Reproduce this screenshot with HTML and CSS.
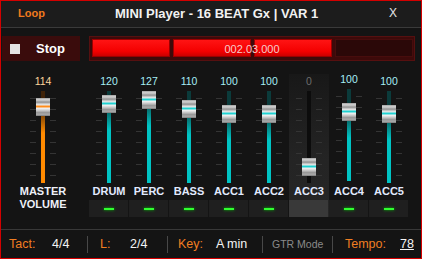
FILE: index.html
```html
<!DOCTYPE html>
<html lang="en">
<head>
    <meta charset="UTF-8">
    <title>MINI Player</title>
    <link rel="stylesheet" href="styles.css">
</head>
<body>

<div class="window">
    <header class="titlebar">
        <span class="loop">Loop</span>
        <span class="title">MINI Player - 16 BEAT Gx | VAR 1</span>
        <span class="close">X</span>
    </header>

    <div class="transport">
        <button class="stop"><span class="stop-sq"></span>Stop</button>
        <div class="progress">
            <div class="seg on"></div>
            <div class="seg on"></div>
            <div class="seg on"></div>
            <div class="seg"></div>
            <span class="pos">002.03.000</span>
        </div>
    </div>

    <!-- Mixer strips are built by the script below -->
    <div class="mixer">
        <div class="strip master" id="master"></div>
        <div class="channels" id="channels"></div>
    </div>

    <footer class="status">
        <div class="cell c1"><span class="k w-tact">Tact:</span><span class="v">4/4</span></div>
        <div class="sep"></div>
        <div class="cell c2"><span class="k w-l">L:</span><span class="v">2/4</span></div>
        <div class="sep"></div>
        <div class="cell c3"><span class="k w-key">Key:</span><span class="v">A min</span></div>
        <div class="sep"></div>
        <div class="cell c4"><span class="gtr">GTR Mode</span></div>
        <div class="sep"></div>
        <div class="cell c5"><span class="k w-tempo">Tempo:</span><span class="v tempo">78</span></div>
    </footer>
</div>

<script>
    const channels = [
        ['DRUM', 120], ['PERC', 127], ['BASS', 110], ['ACC1', 100],
        ['ACC2', 100], ['ACC3', 0, 'sel'], ['ACC4', 100, 'lift'], ['ACC5', 100]
    ];

    // knob top inside the fader box, 127 = top, 0 = bottom
    function knobTop(val) {
        return Math.round(70 - val * 67 / 127);
    }

    function fillStrip(el, name, val, showLed, showFill) {
        const top = knobTop(val);
        el.innerHTML =
            '<div class="value">' + val + '</div>' +
            '<div class="fader">' +
                '<div class="track">' + (showFill ? '<div class="fill" style="top:' + (top + 6) + 'px"></div>' : '') + '</div>' +
                '<div class="knob" style="top:' + top + 'px"></div>' +
            '</div>' +
            '<div class="label">' + name + '</div>' +
            (showLed ? '<div class="led"><span></span></div>' : '');
    }

    fillStrip(document.getElementById('master'), 'MASTER<br>VOLUME', 114, false, true);

    const box = document.getElementById('channels');
    channels.forEach(ch => {
        const el = document.createElement('div');
        el.className = 'strip' + (ch[2] ? ' ' + ch[2] : '');
        fillStrip(el, ch[0], ch[1], true, ch[1] > 0);
        if (ch[2] === 'sel') el.querySelector('.led').innerHTML = '';
        box.appendChild(el);
    });
</script>

</body>
</html>
```

FILE: styles.css
```css
* {
    box-sizing: border-box;
}
body {
    margin: 0;
    background: #141414;
    font-family: "Liberation Sans", Arial, sans-serif;
}
.window {
    width: 422px;
    height: 259px;
    border: 1px solid #d40000;
    background: #141414;
    overflow: hidden;
    display: flex;
    flex-direction: column;
}

/* title bar */
.titlebar {
    flex: none;
    height: 27px;
    padding-bottom: 2px;
    display: flex;
    align-items: center;
    background: #1c1c1c;
    border-bottom: 1px solid #3a3a3a;
}
.loop {
    width: 114px;
    padding-left: 17px;
    color: #f07a1e;
    font-weight: bold;
    font-size: 11px;
}
.title {
    color: #f2f2f2;
    font-weight: bold;
    font-size: 13px;
}
.close {
    margin-left: auto;
    margin-right: 24px;
    color: #e4e4e4;
    font-size: 12px;
}

/* transport row */
.transport {
    flex: none;
    height: 33px;
    padding: 8px 6px 0 1px;
    display: flex;
    gap: 9px;
}
.stop {
    width: 78px;
    height: 25px;
    margin: 0;
    background: #3a0c0c;
    border: none;
    display: flex;
    align-items: center;
    padding: 0 0 0 8px;
    gap: 16px;
    color: #fff;
    font: bold 13px "Liberation Sans", Arial, sans-serif;
}
.stop-sq {
    width: 10px;
    height: 10px;
    background: #e4e4e4;
}
.progress {
    position: relative;
    flex: 1;
    height: 25px;
    background: #3d0a0a;
    border: 1px solid #561010;
    padding: 2px 1px 3px 2px;
    display: flex;
    gap: 3px;
}
.seg {
    flex: 1;
    background: #2b0808;
    border: 1px solid #470d0d;
}
.seg.on {
    background: linear-gradient(#ff1414, #f40000 70%, #cc0000);
    border-color: #9a0000;
}
.pos {
    position: absolute;
    inset: 0;
    display: flex;
    align-items: center;
    justify-content: center;
    color: #f6cccc;
    font-size: 11px;
}

/* mixer */
.mixer {
    flex: none;
    display: flex;
    padding: 13px 0 12px 1px;
}
.channels {
    display: flex;
}
.strip {
    width: 40px;
    display: flex;
    flex-direction: column;
    align-items: center;
}
.strip.master {
    width: 82px;
    margin-right: 5px;
}
.strip.sel {
    background: linear-gradient(#181818, #242424 60%, #262626);
}
.value {
    height: 14px;
    line-height: 14px;
    font-size: 10.5px;
    color: #a6eef6;
}
.master .value {
    color: #ffd49c;
}
.sel .value {
    color: #6c6c6c;
}
.fader {
    position: relative;
    width: 40px;
    height: 97px;
}
.lift .value {
    margin-top: -2px;
}
.lift .fader {
    margin-bottom: 2px;
}
.fader::before, .fader::after {
    content: "";
    position: absolute;
    top: 10px;
    width: 6px;
    height: 78px;
    background: repeating-linear-gradient(to bottom, #343434 0 1px, transparent 1px 11px);
}
.fader::before {
    left: 7px;
}
.fader::after {
    right: 7px;
}
.track {
    position: absolute;
    left: 18px;
    top: 3px;
    width: 4px;
    height: 92px;
    background: #0b3b3b;
    overflow: hidden;
}
.fill {
    position: absolute;
    left: 0;
    right: 0;
    bottom: 0;
    background: linear-gradient(#0b4444, #00c4c4 26px);
}
.master .track {
    background: #3e2208;
}
.master .fill {
    background: linear-gradient(#4a2a0a, #ff8a00 26px);
}
.sel .track {
    background: #0c0c0c;
}
.knob {
    position: absolute;
    left: 13px;
    width: 14px;
    height: 18px;
    background: linear-gradient(#8e8e8e 0, #cfcfcf 1px, #bdbdbd 3px, #8a8a8a 4px, #d6d6d6 6px, #ececec 7px,
        #1fd0d0 8px, #1fd0d0 9px, #f4f4f4 10px, #e6e6e6 11px, #bcbcbc 13px, #8c8c8c 15px, #b4b4b4 16px, #7a7a7a 18px);
}
.master .knob {
    background: linear-gradient(#8e8e8e 0, #cfcfcf 1px, #bdbdbd 3px, #8a8a8a 4px, #d6d6d6 6px, #ececec 7px,
        #ff8c1a 8px, #ff8c1a 9px, #f4f4f4 10px, #e6e6e6 11px, #bcbcbc 13px, #8c8c8c 15px, #b4b4b4 16px, #7a7a7a 18px);
}
.label {
    height: 13px;
    line-height: 13px;
    font-size: 11px;
    font-weight: bold;
    color: #e2eaff;
    white-space: nowrap;
}
.master .label {
    height: auto;
    line-height: 12.5px;
    text-align: center;
    color: #eef0f8;
}
.led {
    align-self: flex-start;
    margin-top: 2px;
    width: 39px;
    height: 17px;
    background: #1f1f1f;
    display: flex;
    align-items: center;
    justify-content: center;
}
.led span {
    width: 10px;
    height: 2px;
    background: #30ff30;
    box-shadow: 0 0 3px #0c0;
}
.sel .led {
    background: #393939;
}

/* status bar */
.status {
    flex: none;
    height: 29px;
    border-top: 1px solid #383838;
    display: flex;
    align-items: center;
    font-size: 12.5px;
}
.cell {
    display: flex;
    align-items: center;
}
.c1 { width: 86px; padding-left: 8px; }
.c2 { width: 79px; padding-left: 12px; }
.c3 { width: 94px; padding-left: 10px; }
.c4 { width: 69px; padding-left: 9px; }
.c5 { flex: 1; padding-left: 12px; }
.sep {
    width: 1px;
    height: 17px;
    background: #484848;
}
.k {
    color: #f07e22;
}
.w-tact { width: 43px; }
.w-l { width: 30px; }
.w-key { width: 38px; }
.w-tempo { width: 55px; }
.v {
    color: #f4f4f4;
}
.tempo {
    text-decoration: underline;
}
.gtr {
    color: #8a8a8a;
    font-size: 10.5px;
}
```
